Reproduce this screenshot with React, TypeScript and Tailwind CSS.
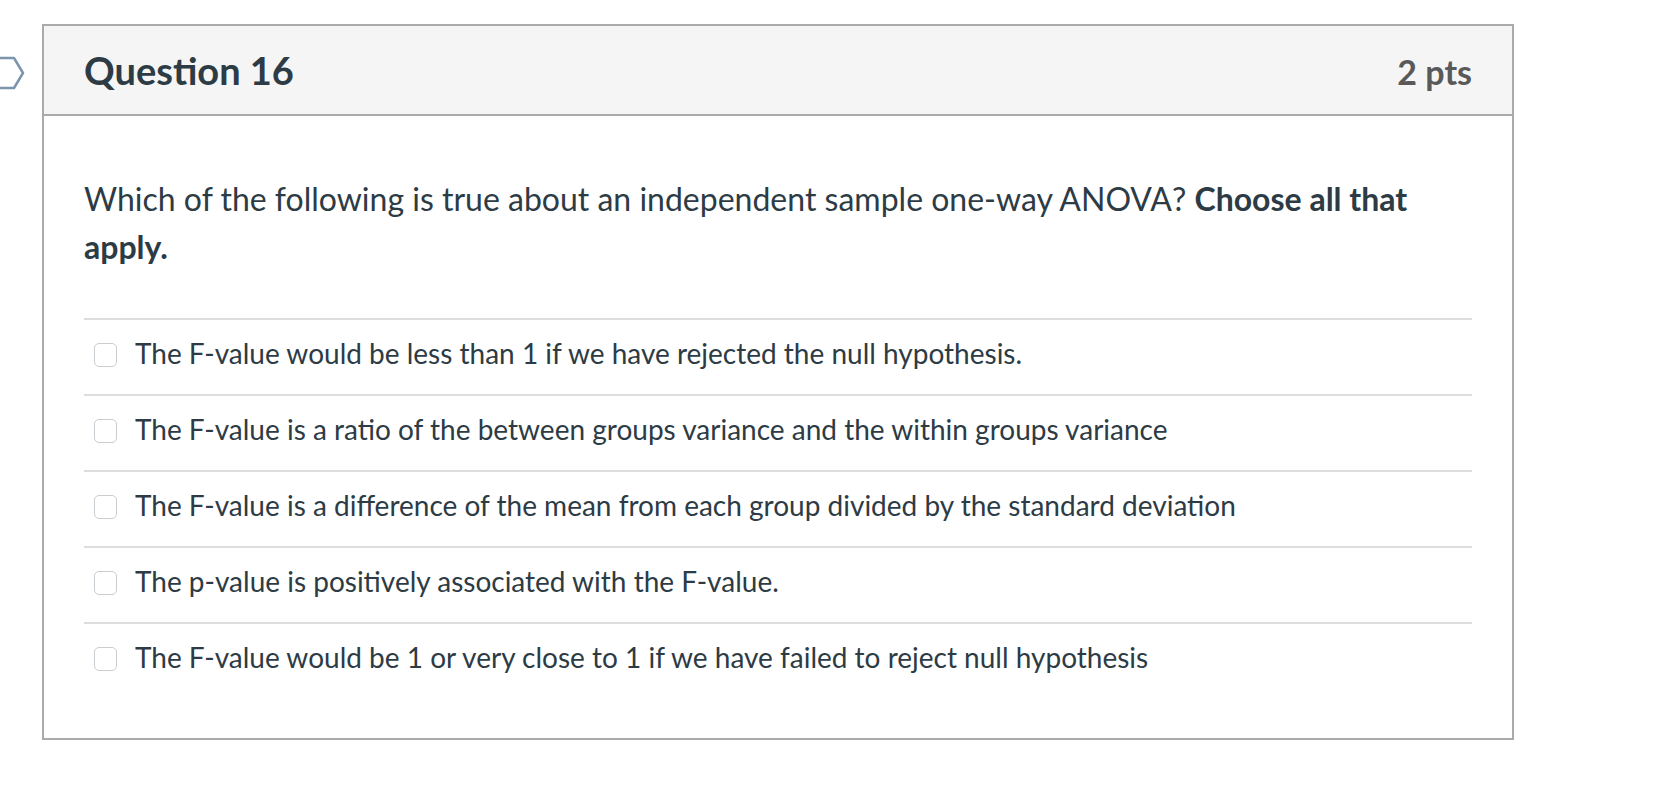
const answers = [
  "The F-value would be less than 1 if we have rejected the null hypothesis.",
  "The F-value is a ratio of the between groups variance and the within groups variance",
  "The F-value is a difference of the mean from each group divided by the standard deviation",
  "The p-value is positively associated with the F-value.",
  "The F-value would be 1 or very close to 1 if we have failed to reject null hypothesis",
];

function FlagIcon() {
  return (
    <svg width="42" height="40" viewBox="0 0 42 40" className="block">
      <path d="M-4 5 H14 L23 20 L14 35 H-4" fill="#ffffff" stroke="#7b95ad" strokeWidth="2.5" strokeLinejoin="round" />
    </svg>
  );
}

export default function App() {
  return (
    <div
      className="w-[1680px] h-[796px] bg-white text-[#2d3b45]"
      style={{ fontFamily: "Lato, 'Noto Sans', sans-serif" }}
    >
      <div className="flex pt-[24px]">
        <div className="w-[42px] shrink-0 pt-[29px]">
          <FlagIcon />
        </div>
        <div className="w-[1472px] h-[716px] border-2 border-[#aaaaaa] flex flex-col">
          <div className="h-[90px] shrink-0 bg-[#f5f5f5] border-b-2 border-[#aaaaaa] px-[40px] flex items-center justify-between">
            <h2 className="text-[38px] font-bold leading-none">Question 16</h2>
            <span className="text-[34px] font-bold leading-none text-[#595959] pt-[3px]">2 pts</span>
          </div>
          <div className="px-[40px] pt-[59px]">
            <p className="text-[32px] leading-[48px]">
              Which of the following is true about an independent sample one-way ANOVA?{" "}
              <strong className="font-bold">Choose all that apply.</strong>
            </p>
            <div className="mt-[47px]">
              {answers.map(a => (
                <label
                  key={a}
                  className="flex items-center h-[76px] border-t-2 border-[#dddddd] pl-[10px] pb-[4px] gap-[18px] cursor-pointer"
                >
                  <span className="w-[23px] h-[24px] rounded-[5px] border border-[#c7cdd1] bg-white shrink-0" />
                  <span className="text-[28px] leading-[36px] pb-[4px]">{a}</span>
                </label>
              ))}
            </div>
          </div>
        </div>
      </div>
    </div>
  );
}
